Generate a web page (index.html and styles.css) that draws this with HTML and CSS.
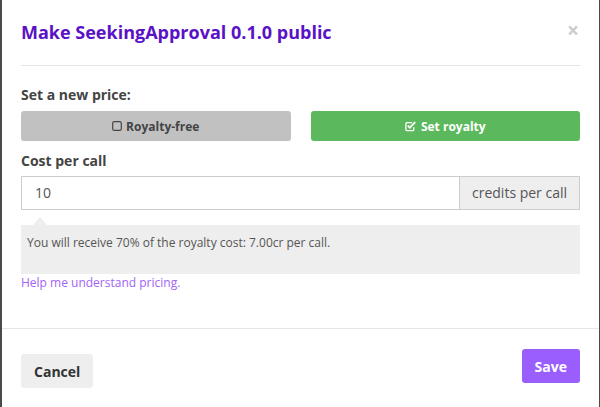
FILE: index.html
```html
<!DOCTYPE html>
<html>
<head>
<meta charset="utf-8">
<link rel="stylesheet" href="styles.css">
</head>
<body>
<div class="modal">
  <div class="modal-header">
    <h1 class="title">Make SeekingApproval 0.1.0 public</h1>
    <span class="close">×</span>
  </div>
  <div class="modal-body">
    <div class="label label-price">Set a new price:</div>
    <div class="choice-row">
      <button class="choice choice-off">
        <svg class="icon" width="10" height="10" viewBox="0 0 10 10"><rect x="0.7" y="0.7" width="8.6" height="8.6" rx="1.6" fill="none" stroke="#444" stroke-width="1.2"/></svg>
        Royalty-free
      </button>
      <button class="choice choice-on">
        <svg class="icon" width="12" height="11" viewBox="0 0 12 11"><path d="M8.8 6.2v2.2a1.2 1.2 0 0 1-1.2 1.2H2.1A1.2 1.2 0 0 1 0.9 8.4V2.9a1.2 1.2 0 0 1 1.2-1.2h5" fill="none" stroke="#fff" stroke-width="1.3"/><path d="M2.8 4.6l2 2 5.4-5.4" fill="none" stroke="#fff" stroke-width="1.9"/></svg>
        Set royalty
      </button>
    </div>
    <div class="label label-cost">Cost per call</div>
    <div class="input-group">
      <div class="input">10</div>
      <div class="addon">credits per call</div>
    </div>
    <div class="callout">
      <p class="callout-text">You will receive 70% of the royalty cost: 7.00cr per call.</p>
    </div>
    <a class="help" href="#">Help me understand pricing.</a>
  </div>
  <div class="modal-footer">
    <button class="btn btn-cancel">Cancel</button>
    <button class="btn btn-save">Save</button>
  </div>
</div>
</body>
</html>
```

FILE: styles.css
```css
* { box-sizing: border-box; }
html, body { margin: 0; padding: 0; }
body {
  background: #4a4a4a;
  font-family: "Open Sans", "Noto Sans", sans-serif;
  height: 407px;
  overflow: hidden;
}
.modal {
  margin-left: 2px;
  width: 597px;
  height: 407px;
  background: #fff;
}
.modal-header {
  margin: 0 19px;
  padding: 20px 0 21px;
  border-bottom: 1px solid #e5e5e5;
  display: flex;
  justify-content: space-between;
  align-items: flex-start;
}
.title {
  margin: 0;
  font-size: 18px;
  line-height: 24px;
  font-weight: 700;
  color: #5a12c6;
}
.close {
  font-size: 21px;
  line-height: 21px;
  font-weight: 700;
  color: #cccccc;
  margin-right: 1px;
}
.modal-body {
  padding: 19px 19px 0;
  height: 262px;
}
.label {
  font-weight: 700;
  color: #444;
  font-size: 14px;
  line-height: 20px;
}
.label-price {
  margin-bottom: 6px;
}
.label-cost {
  margin-top: 10px;
  margin-bottom: 5px;
}
.choice-row {
  display: flex;
  gap: 20px;
}
.choice {
  flex: 1;
  height: 30px;
  border: 0;
  border-radius: 3px;
  font-family: inherit;
  font-size: 12px;
  font-weight: 700;
  display: flex;
  align-items: center;
  justify-content: center;
  gap: 4px;
  padding: 0;
}
.choice-off { background: #c1c1c1; color: #444; }
.choice-on { background: #5cb85c; color: #fff; }
.icon { display: block; }
.input-group {
  display: flex;
  height: 34px;
}
.input {
  flex: 1;
  border: 1px solid #ccc;
  border-right: 0;
  padding: 0 13px;
  font-size: 14px;
  line-height: 32px;
  color: #555;
}
.addon {
  width: 121px;
  border: 1px solid #ccc;
  background: #eee;
  padding: 0 12px;
  font-size: 14px;
  line-height: 32px;
  color: #555;
  white-space: nowrap;
}
.callout {
  position: relative;
  margin-top: 15px;
  background: #eee;
  padding: 9px 6px 0;
  height: 49px;
}
.callout::before {
  content: "";
  position: absolute;
  left: 12px;
  top: -8px;
  border-left: 7px solid transparent;
  border-right: 7px solid transparent;
  border-bottom: 8px solid #eee;
}
.callout-text {
  margin: 0;
  font-size: 12px;
  line-height: 17px;
  color: #555;
}
.help {
  display: block;
  font-size: 12px;
  line-height: 17px;
  color: #a264f7;
  text-decoration: none;
}
.modal-footer {
  border-top: 1px solid #e5e5e5;
  padding: 20px 19px 0;
  display: flex;
  justify-content: space-between;
  align-items: flex-start;
}
.btn {
  height: 34px;
  border: 0;
  border-radius: 3px;
  padding: 0 13px;
  font-family: inherit;
  font-size: 14px;
  font-weight: 700;
}
.btn-cancel {
  margin-top: 5px;
  background: #eee;
  color: #333;
}
.btn-save {
  background: #9a5eff;
  color: #fff;
}
```
